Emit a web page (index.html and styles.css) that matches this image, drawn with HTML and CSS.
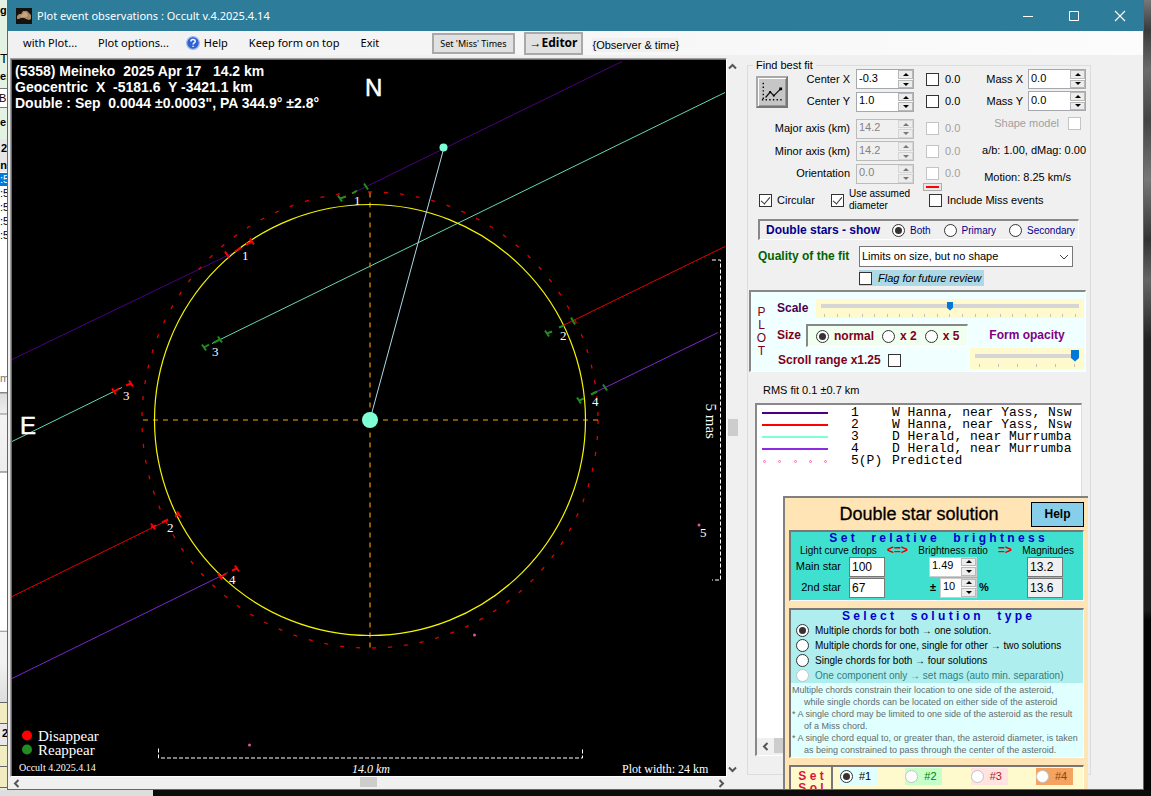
FILE: index.html
```html
<!DOCTYPE html>
<html lang="en">
<head>
<meta charset="utf-8">
<title>Plot event observations : Occult v.4.2025.4.14</title>
<link rel="stylesheet" href="styles.css">
</head>
<body>
<div class="desktop">
  <div class="behind-left">
    <div class="strip strip-green"><span>g</span><span class="tall">T</span><span>e:</span><span class="field">B</span><span class="last">e</span></div>
    <div class="strip strip-grey"><span>2</span><span>n</span></div>
    <div class="strip strip-list"><span class="selected">:5</span><span>:5</span><span>:5</span><span>:5</span><span>:5</span></div>
    <div class="strip strip-mid"><span>m</span></div>
    <div class="strip strip-low"></div>
    <div class="strip strip-boxes"><i></i><span>2</span><i></i><i></i></div>
  </div>

  <main class="window">
    <header class="titlebar">
      <svg class="app-icon" viewBox="0 0 16 16" width="16" height="16"><rect width="16" height="16" fill="#14110f"/><path d="M1 11 L1 8 L3 6 L5 6 L7 3 L11 3 L13 5 L15 7 L15 11 L13 12 L10 11 L8 10 L5 10 L3 11 Z" fill="#a98663"/><path d="M3 8 L6 7 L8 4 L11 5 L12 8 L10 9 L6 9 Z" fill="#c9a57c"/></svg>
      <h1>Plot event observations : Occult v.4.2025.4.14</h1>
      <div class="caption-buttons">
        <button type="button" aria-label="Minimize"><svg width="12" height="12" viewBox="0 0 12 12"><path d="M1 6.5h10" stroke="#fff"/></svg></button>
        <button type="button" aria-label="Maximize"><svg width="12" height="12" viewBox="0 0 12 12"><path d="M1.5 1.5h9v9h-9z" stroke="#fff" fill="none"/></svg></button>
        <button type="button" aria-label="Close"><svg width="12" height="12" viewBox="0 0 12 12"><path d="M1 1l10 10M11 1L1 11" stroke="#fff" stroke-width="1.2"/></svg></button>
      </div>
    </header>

    <nav class="menubar">
      <button type="button">with Plot...</button>
      <button type="button">Plot options...</button>
      <button type="button" class="with-icon"><svg width="14" height="14" viewBox="0 0 14 14"><circle cx="7" cy="7" r="6.3" fill="#2f62d0" stroke="#9db7e8" stroke-width="1.2"/><path d="M4.9 5.4c0-2.6 4.3-2.6 4.3 0 0 1.5-2.1 1.5-2.1 3.1M7.1 9.7v1.4" stroke="#fff" stroke-width="1.4" fill="none"/></svg>Help</button>
      <button type="button">Keep form on top</button>
      <button type="button">Exit</button>
      <button type="button" class="push push-miss">Set 'Miss' Times</button>
      <button type="button" class="push push-editor">→Editor</button>
      <span class="hint">{Observer &amp; time}</span>
    </nav>

    <div class="content">
      <section class="viewer">
        <div class="plot">
          <svg viewBox="12 61 713 713" role="img" aria-label="Occultation chord plot">
            <g fill="none">
              <path d="M12 359L240 249M352 193L622 61" stroke="#4b0082"/>
              <path d="M12 441L122 387M212 343L725 92" stroke="#66d8ae"/>
              <path d="M12 596L167 520M563 325L725 246" stroke="#e60000"/>
              <path d="M12 678L228 572M597 391L718 332" stroke="#7c26cc"/>
              <circle cx="370" cy="419.5" r="228" stroke="#e00000" stroke-width="1.3" stroke-dasharray="4 12"/>
              <path d="M143 419.5H598" stroke="#ffa500" stroke-dasharray="5 5"/>
              <path d="M370 192V647" stroke="#c88000" stroke-width="1.4" stroke-dasharray="5 5"/>
              <circle cx="370" cy="419.5" r="215.5" stroke="#f5f500" stroke-width="1.2"/>
              <path d="M444 147L370 419" stroke="#add8e6"/>
              <path d="M158.5 748V757.5H582.5V748M712 259.5H720.5V579.5H712" stroke="#fff" stroke-dasharray="4 2"/>
              <g stroke="#ff0000" stroke-width="2">
                <path d="M225 251l4 6M235 251l6-4M246 244l6-3M250 238l4 6"/>
                <path d="M112 388l4 6M114 391l5-3M126 385l5-2M129 380l4 6"/>
                <path d="M151 523l4 6M151 527l5-2M162 522l6-3M175 516l4-2M177 511l4 6"/>
                <path d="M218 573l4 6M220 577l6-4M232 570l5-2M235 565l4 6"/>
              </g>
              <g stroke="#228b22" stroke-width="2">
                <path d="M338 195l4 6M340 198l6-2M352 193l5-3M364 183l4 6"/>
                <path d="M202 344l4 6M204 347l5-3M214 342l6-3M218 336l4 6"/>
                <path d="M545 330l4 6M547 333l5-2M559 327l5-2M571 317l4 7"/>
                <path d="M577 397l4 6M579 400l5-2M591 394l6-3M603 384l4 6"/>
              </g>
            </g>
            <g fill="#7fffd4"><circle cx="443.5" cy="147" r="4"/><circle cx="370" cy="419.5" r="8"/></g>
            <g fill="#d8589c"><circle cx="699" cy="524.500" r="1.500"/><circle cx="474.500" cy="634.500" r="1.500"/><circle cx="249.500" cy="744.500" r="1.500"/></g>
            <circle cx="27" cy="735" r="5" fill="#ff0000"/><circle cx="27" cy="749" r="5" fill="#228b22"/>
            <g class="t-head">
              <text x="15" y="75">(5358) Meineko  2025 Apr 17   14.2 km</text>
              <text x="15" y="91">Geocentric  X  -5181.6  Y -3421.1 km</text>
              <text x="15" y="107">Double : Sep  0.0044 ±0.0003", PA 344.9° ±2.8°</text>
            </g>
            <g class="t-compass"><text x="365" y="95">N</text><text x="20" y="433">E</text></g>
            <g class="t-num">
              <text x="354" y="204">1</text><text x="242" y="259">1</text><text x="212" y="355">3</text><text x="123" y="399">3</text>
              <text x="560" y="339">2</text><text x="167" y="531">2</text><text x="592" y="405">4</text><text x="229" y="583">4</text><text x="700" y="536">5</text>
              <text x="622" y="772" class="t-width">Plot width: 24 km</text>
              <text x="352" y="772" class="t-italic">14.0 km</text>
            </g>
            <g class="t-legend"><text x="38" y="740">Disappear</text><text x="38" y="754">Reappear</text><text transform="translate(706 403) rotate(90)">5 mas</text></g>
            <text class="t-version" x="19" y="770">Occult 4.2025.4.14</text>
          </svg>
        </div>
        <div class="scroll scroll-v">
          <button type="button" aria-label="Scroll up"><svg width="9" height="9" viewBox="0 0 9 9"><path d="M1 6.500L4.500 3L8 6.500"/></svg></button>
          <i class="track-a"></i><i class="thumb"></i><i class="track-b"></i>
          <button type="button" aria-label="Scroll down"><svg width="9" height="9" viewBox="0 0 9 9"><path d="M1 2.500L4.500 6L8 2.500"/></svg></button>
        </div>
        <div class="scroll scroll-h">
          <button type="button" aria-label="Scroll left"><svg width="9" height="9" viewBox="0 0 9 9"><path d="M6.500 1L3 4.500L6.500 8"/></svg></button>
          <i class="track-b"></i><i class="thumb"></i><i class="track-b"></i>
          <button type="button" aria-label="Scroll right"><svg width="9" height="9" viewBox="0 0 9 9"><path d="M2.500 1L6 4.500L2.500 8"/></svg></button>
        </div>
      </section>

      <aside class="side">
        <fieldset class="best-fit">
          <legend>Find best fit</legend>

          <div class="fit-top">
            <button type="button" class="chart-button" aria-label="Plot light curve"><svg width="24" height="24" viewBox="0 0 24 24"><path d="M2.500 2V21M1 20.500H23" stroke="#000" stroke-width="1.500" stroke-dasharray="1.500 2.500" fill="none"/><path d="M5 18L10 12L14 16L22 8" stroke="#111" stroke-width="1.300" fill="none"/><path d="M20 7h3v3h-3zM9 11h2v2H9zM13 15h2v2h-2z"/></svg></button>
            <div class="fit-rows">
              <label for="cx">Center X</label>
              <span class="spin"><input id="cx" type="text" value="-0.3"><span class="ud"><button type="button" aria-label="Up"></button><button type="button" aria-label="Down"></button></span></span>
              <label class="tick"><input type="checkbox">0.0</label>
              <label for="cy">Center Y</label>
              <span class="spin"><input id="cy" type="text" value="1.0"><span class="ud"><button type="button" aria-label="Up"></button><button type="button" aria-label="Down"></button></span></span>
              <label class="tick"><input type="checkbox">0.0</label>
              <span class="fit-break"></span>
              <label for="maj">Major axis (km)</label>
              <span class="spin off"><input id="maj" type="text" value="14.2" disabled><span class="ud"><button type="button" disabled aria-label="Up"></button><button type="button" disabled aria-label="Down"></button></span></span>
              <label class="tick off"><input type="checkbox" disabled>0.0</label>
              <label for="min">Minor axis (km)</label>
              <span class="spin off"><input id="min" type="text" value="14.2" disabled><span class="ud"><button type="button" disabled aria-label="Up"></button><button type="button" disabled aria-label="Down"></button></span></span>
              <label class="tick off"><input type="checkbox" disabled>0.0</label>
              <label for="ori">Orientation</label>
              <span class="spin off"><input id="ori" type="text" value="0.0" disabled><span class="ud"><button type="button" disabled aria-label="Up"></button><button type="button" disabled aria-label="Down"></button></span></span>
              <label class="tick off"><input type="checkbox" disabled>0.0</label>
            </div>
            <div class="fit-mass">
              <div><label for="mx">Mass X</label><span class="spin"><input id="mx" type="text" value="0.0"><span class="ud"><button type="button" aria-label="Up"></button><button type="button" aria-label="Down"></button></span></span></div>
              <div><label for="my">Mass Y</label><span class="spin"><input id="my" type="text" value="0.0"><span class="ud"><button type="button" aria-label="Up"></button><button type="button" aria-label="Down"></button></span></span></div>
              <label class="shape off">Shape model<input type="checkbox" disabled></label>
              <p>a/b: 1.00, dMag: 0.00</p>
              <p class="motion">Motion: 8.25 km/s</p>
            </div>
          </div>

          <button type="button" class="red-key" aria-label="Clear"><i></i></button>

          <div class="fit-options">
            <label><input type="checkbox" checked>Circular</label>
            <label class="two-line"><input type="checkbox" checked><span>Use assumed diameter</span></label>
            <label><input type="checkbox">Include Miss events</label>
          </div>

          <div class="double-show">
            <b>Double stars - show</b>
            <label><input type="radio" name="show" checked>Both</label>
            <label><input type="radio" name="show">Primary</label>
            <label><input type="radio" name="show">Secondary</label>
          </div>

          <div class="quality">
            <label for="quality">Quality of the fit</label>
            <span class="select-wrap"><select id="quality"><option>Limits on size, but no shape</option></select><svg width="10" height="6" viewBox="0 0 10 6"><path d="M1 1l4 4l4-4" stroke="#444" fill="none"/></svg></span>
            <label class="flag"><input type="checkbox">Flag for future review</label>
          </div>

          <div class="plot-box">
            <div class="plot-word"><span>P</span><span>L</span><span>O</span><span>T</span></div>
            <div class="plot-controls">
              <div class="scale-row">
                <label for="scale">Scale</label>
                <div class="slider"><input id="scale" type="range" min="0" max="20" value="10"><div class="ticks"><i></i><i></i><i></i><i></i><i></i><i></i><i></i><i></i><i></i><i></i><i></i><i></i><i></i><i></i><i></i><i></i><i></i><i></i><i></i><i></i><i></i></div></div>
              </div>
              <div class="plot-lower">
                <div class="size-col">
                  <div class="size-row"><span>Size</span>
                    <div class="size-box">
                      <label><input type="radio" name="size" checked>normal</label>
                      <label><input type="radio" name="size">x 2</label>
                      <label><input type="radio" name="size">x 5</label>
                    </div>
                  </div>
                  <label class="range-row">Scroll range x1.25<input type="checkbox"></label>
                </div>
                <div class="opacity-col">
                  <label for="opacity">Form opacity</label>
                  <div class="slider slider-opacity"><input id="opacity" type="range" min="0" max="5" value="5"><div class="ticks"><i></i><i></i><i></i><i></i><i></i><i></i></div></div>
                </div>
              </div>
            </div>
          </div>

          <p class="rms">RMS fit 0.1 ±0.7 km</p>

          <div class="observers">
            <ul>
              <li><i class="key k1"></i><span>1</span><span>W Hanna, near Yass, Nsw</span></li>
              <li><i class="key k2"></i><span>2</span><span>W Hanna, near Yass, Nsw</span></li>
              <li><i class="key k3"></i><span>3</span><span>D Herald, near Murrumba</span></li>
              <li><i class="key k4"></i><span>4</span><span>D Herald, near Murrumba</span></li>
              <li><span class="dots"><i></i><i></i><i></i><i></i><i></i></span><span>5(P)</span><span>Predicted</span></li>
            </ul>
            <div class="list-scroll"><button type="button" aria-label="Scroll list left"><svg width="9" height="9" viewBox="0 0 9 9"><path d="M6.500 1L3 4.500L6.500 8"/></svg></button><i></i></div>
          </div>
        </fieldset>

        <section class="solution">
          <div class="solution-head"><h2>Double star solution</h2><button type="button">Help</button></div>

          <div class="brightness">
            <h3>S e t     r e l a t i v e     b r i g h t n e s s</h3>
            <div class="bright-heads"><span>Light curve drops</span><b>&lt;=&gt;</b><span>Brightness ratio</span><b>=&gt;</b><span>Magnitudes</span></div>
            <div class="bright-row">
              <label for="main">Main star</label><input id="main" type="text" value="100">
              <span class="ratio"><span class="spin"><input type="text" value="1.49" aria-label="Brightness ratio"><span class="ud"><button type="button" aria-label="Up"></button><button type="button" aria-label="Down"></button></span></span></span>
              <b></b><input class="out" type="text" value="13.2" readonly aria-label="Main magnitude">
            </div>
            <div class="bright-row">
              <label for="second">2nd star</label><input id="second" type="text" value="67">
              <span class="ratio"><b>±</b><span class="spin narrow"><input type="text" value="10" aria-label="Tolerance"><span class="ud"><button type="button" aria-label="Up"></button><button type="button" aria-label="Down"></button></span></span></span>
              <b class="percent">%</b><input class="out" type="text" value="13.6" readonly aria-label="Second magnitude">
            </div>
          </div>

          <div class="types">
            <h3>S e l e c t     s o l u t i o n     t y p e</h3>
            <label><input type="radio" name="type" checked>Multiple chords for both → one solution.</label>
            <label><input type="radio" name="type">Multiple chords for one, single for other → two solutions</label>
            <label><input type="radio" name="type">Single chords for both → four solutions</label>
            <label class="off"><input type="radio" name="type" disabled>One component only → set mags (auto min. separation)</label>
            <div class="notes">
              <p>Multiple chords constrain their location to one side of the asteroid,</p>
              <p class="in">while single chords can be located on either side of the asteroid</p>
              <p>* A single chord may be limited to one side of the asteroid as the result</p>
              <p class="in">of a Miss chord.</p>
              <p>* A single chord equal to, or greater than, the asteroid diameter, is taken</p>
              <p class="in">as being constrained to pass through the center of the asteroid.</p>
            </div>
          </div>

          <div class="sets">
            <div class="set-word"><span>S e t</span><span>S o l</span></div>
            <div class="set-options">
              <label class="s1"><input type="radio" name="set" checked>#1</label>
              <label class="s2"><input type="radio" name="set" disabled>#2</label>
              <label class="s3"><input type="radio" name="set" disabled>#3</label>
              <label class="s4"><input type="radio" name="set" disabled>#4</label>
            </div>
          </div>
        </section>
      </aside>
    </div>
  </main>

  <div class="behind-right"></div>
  <div class="behind-bottom"><i></i></div>
</div>
</body>
</html>
```
FILE: styles.css
```css
* { box-sizing: border-box; margin: 0; padding: 0; }
body { font: 11px/13px "Liberation Sans", Arial, sans-serif; color: #000; background: #0c0c0c; }
button, input, select { font: inherit; color: inherit; }
button { border: 0; background: none; }
i { display: block; font-style: normal; }

.desktop { display: grid; grid-template-columns: 7px minmax(0, 1fr) 7px; grid-template-rows: minmax(0, 1fr) 6px; height: 100vh; }

/* windows behind the form */
.behind-left { display: flex; flex-direction: column; overflow: hidden; font-weight: bold; }
.strip { display: flex; flex-direction: column; }
.strip-green { height: 139px; padding-top: 4px; background: #e3f2e3; gap: 5px; }
.strip-green .tall { margin-top: 30px; font-weight: normal; font-size: 13px; }
.strip-green .field { background: #fff; border: solid #777; border-width: 1px 0; height: 20px; line-height: 18px; font-weight: normal; margin-left: -1px; }
.strip-green .last { margin-top: 3px; }
.strip-grey { height: 33px; background: #e6e6e6; align-items: flex-end; justify-content: space-between; padding-top: 3px; }
.strip-list { height: 200px; background: #fff; gap: 1px; padding-top: 1px; font-weight: normal; }
.strip-list .selected { background: #0078d7; color: #fff; }
.strip-mid { height: 260px; color: #777; font-weight: normal; background: linear-gradient(#fff 20px, #888 20px, #888 21px, #ddd 22px, #eee 41px, #888 42px, #f4f4f4 43px, #eee 99px, #666 100px, #fff 101px, #fff 258px, #888); }
.strip-low { height: 71px; background: linear-gradient(#f2f2f2 30px, #ddd); border-bottom: 1px solid #666; }
.strip-boxes { flex: 1; background: #e8e8e8; }
.strip-boxes i { height: 21px; background: #f2edc0; border-bottom: 1px solid #666; }
.strip-boxes span { height: 22px; border-bottom: 1px solid #666; padding: 3px 0 0 2px; }
.behind-right { background: linear-gradient(#777, #3a3a3a 30px, #6b6b6b 70px, #444 120px, #777 180px, #333 240px, #666 280px, #222 340px, #1b1b1b 610px, #050505 620px); }
.behind-bottom { grid-column: 1 / -1; background: #0c0c0c; }
.behind-bottom i { width: 153px; height: 6px; background: #dedede; }

/* window frame */
.window { display: flex; flex-direction: column; border: solid #2d7a96; border-width: 0 1px 1px; background: #f0f0f0; min-width: 0; overflow: hidden; }
.titlebar { display: flex; align-items: center; height: 31px; padding-left: 8px; gap: 5px; background: #2d7c99; color: #fff; flex: none; }
.titlebar h1 { flex: 1; font: 11px/16px "Noto Sans", sans-serif; }
.caption-buttons { display: flex; }
.caption-buttons button { width: 46px; height: 30px; display: grid; place-items: center; }
.menubar { display: flex; align-items: center; height: 24px; padding-left: 15px; flex: none; background: linear-gradient(90deg, #f1f1f1, #fcfcfc); font: 11px/16px "Noto Sans", sans-serif; }
.menubar button { margin-right: 21px; white-space: nowrap; }
.menubar .with-icon { display: flex; align-items: center; gap: 4px; margin: 0 21px 0 -4px; }
.menubar .push { border: 2px solid #a9a9a9; background: #e1e1e1; }
.menubar .push-miss { height: 21px; padding: 0 6px; margin: 0 9px 0 32px; font: 9px/15px "Noto Sans", sans-serif; }
.menubar .push-editor { height: 23px; padding: 0 4px; margin-right: 9px; font-weight: bold; font-size: 12px; }
.hint { background: #f0f0f0; font: 11px/14px "Liberation Sans", sans-serif; margin-top: 3px; }
.content { display: flex; flex: 1; min-height: 0; gap: 9px; padding-right: 52px; }

/* plot viewer */
.viewer { flex: 1; min-width: 0; display: grid; grid-template-columns: minmax(0, 1fr) 11px; grid-template-rows: minmax(0, 1fr) 12px; padding: 3px 0 0 2px; }
.plot { background: #000; border: 1px solid; border-color: #a0a0a0 #fff #fff #a0a0a0; box-shadow: inset 1px 1px #696969; padding: 2px 1px 1px 1px; overflow: hidden; }
.plot svg { display: block; width: 100%; height: 100%; }
.plot text { fill: #fff; white-space: pre; }
.t-head { font: bold 14px "Liberation Sans", sans-serif; }
.t-compass { font: 24px "Liberation Sans", sans-serif; stroke: #fff; stroke-width: 0.5; }
.t-num { font: 13px "Liberation Serif", serif; }
.t-width { font-size: 12px; }
.t-italic { font-style: italic; font-size: 12px; }
.t-legend { font: 15px "Liberation Serif", serif; }
.t-version { font: 10px "Liberation Serif", serif; }
.scroll { display: flex; }
.scroll path, .list-scroll path { fill: none; stroke: #555; stroke-width: 2; }
.scroll button { display: grid; place-items: center; width: 12px; height: 12px; }
.scroll-v { flex-direction: column; align-items: center; padding: 2px 0; }
.scroll-v .thumb { width: 10px; height: 17px; }
.scroll .thumb { background: #cdcdcd; }
.track-a { flex: 52; }
.track-b { flex: 49; }
.scroll-h .thumb { width: 17px; height: 10px; }

/* side panel */
.side { position: relative; flex: none; width: 344px; padding-top: 4px; overflow: hidden; }
.best-fit { border: 1px solid #dcdcdc; min-width: 0; height: 716px; padding: 0 4px 0 0; }
.best-fit legend { margin-left: 5px; padding: 0 3px; }
label { white-space: nowrap; }
.off { color: #a0a0a0; }
input[type=checkbox], input[type=radio] { appearance: none; flex: none; width: 13px; height: 13px; border: 1px solid #333; background: #fff; display: grid; place-items: center; }
input[type=radio] { border-radius: 50%; }
input[type=checkbox]:disabled, input[type=radio]:disabled { border-color: #c4c4c4; }
input[type=checkbox]:checked::before { content: ""; width: 4px; height: 8px; border: solid #333; border-width: 0 1px 1px 0; rotate: 40deg; translate: 0 -1px; }
input[type=radio]:checked::before { content: ""; width: 7px; height: 7px; border-radius: 50%; background: #333; }

.spin { display: flex; width: 58px; height: 20px; border: 1px solid #a5a8ad; background: #fff; }
.spin input { flex: 1; min-width: 0; border: 0; background: none; padding: 0 2px 2px; outline: 0; }
.spin .ud { display: grid; width: 15px; gap: 1px; }
.ud button { background: #ececec; border: 1px solid #b8b8b8; display: grid; place-items: center; }
.ud button::before { content: ""; border: 3px solid transparent; border-top-width: 0; border-bottom-color: #000; }
.ud button + button::before { border-top: 3px solid #000; border-bottom: 0; }
.spin.off { background: #f0f0f0; border-color: #bbb; color: #838383; }
.off .ud button::before { border-bottom-color: #777; }
.off .ud button + button::before { border-top-color: #777; }
.spin.off .ud button { border-color: #d5d5d5; }

.fit-top { display: flex; padding-left: 8px; margin-top: -3px; }
.chart-button { flex: none; width: 32px; height: 32px; margin-top: 7px; background: #c6c6c6; border: 2px solid; border-color: #a8a8a8 #777 #777 #a8a8a8; box-shadow: inset 1px 1px #fff, inset -1px -1px #999; display: grid; place-items: center; }
.chart-button svg { width: 22px; height: 24px; }
.fit-rows { flex: none; display: grid; grid-template-columns: 62px 58px auto; column-gap: 6px; row-gap: 2px; align-items: center; }
.fit-rows > label:not(.tick) { justify-self: end; }
.fit-rows > * { min-height: 20px; display: flex; align-items: center; }
.fit-rows > .spin { align-items: stretch; }
.fit-rows > .fit-break { grid-column: 1 / -1; min-height: 2px; height: 2px; }
.tick { gap: 6px; padding-left: 6px; }
.fit-mass { flex: 1; display: flex; flex-direction: column; align-items: flex-end; gap: 2px; }
.fit-mass div { display: flex; align-items: center; gap: 5px; }
.shape { display: flex; align-items: center; gap: 9px; margin: 4px 5px 0 0; }
.fit-mass p { margin-top: 12px; }
.fit-mass p.motion { margin-right: 15px; }
.red-key { display: grid; place-items: center; width: 19px; height: 8px; margin: -1px 0 0 175px; border: 1px solid #adadad; background: #e8e8e8; }
.red-key i { width: 13px; height: 2px; background: #f00; }
.fit-options { display: flex; height: 18px; align-items: center; padding-left: 11px; }
.fit-options label { display: flex; align-items: center; gap: 5px; }
.fit-options .two-line { margin: 0 14px 0 16px; }
.two-line span { width: 66px; line-height: 12px; font-size: 10px; white-space: normal; }

.double-show { display: flex; align-items: center; height: 21px; margin: 10px 7px 0 10px; padding-left: 6px; border: solid; border-width: 2px 1px 1px 2px; border-color: #888 #fff #fff #888; color: #00008b; }
.double-show b { font-size: 12px; margin-right: 12px; }
.double-show label { display: flex; align-items: center; gap: 5px; font-size: 10px; margin-right: 13px; }
.double-show label:last-child { margin-right: 0; }
.quality { display: grid; grid-template-columns: 101px minmax(0, 1fr); margin: 6px 13px 0 10px; align-items: center; row-gap: 3px; }
.quality > label:first-child { font-weight: bold; font-size: 12px; color: #006400; }
.select-wrap { position: relative; display: block; }
.select-wrap select { appearance: none; display: block; width: 100%; height: 21px; border: 1px solid #777; background: #fff; padding: 0 2px; border-radius: 0; }
.select-wrap svg { position: absolute; right: 4px; top: 8px; }
.quality .flag { grid-column: 2; justify-self: start; display: flex; align-items: center; gap: 6px; height: 16px; padding-right: 3px; background: #add8e6; font-style: italic; }

.plot-box { display: flex; margin: 4px 0 0 1px; height: 82px; padding: 7px 1px 0 5px; border: solid; border-width: 2px 1px 1px 2px; border-color: #888 #fff #fff #888; background: #f0ffff; color: #800020; font-weight: bold; font-size: 12px; }
.plot-word { display: flex; flex-direction: column; align-items: center; width: 11px; padding-top: 7px; font-weight: normal; }
.plot-controls { flex: 1; min-width: 0; padding-left: 10px; }
.scale-row { display: flex; align-items: center; }
.scale-row label { width: 39px; color: #4b0050; }
.slider { flex: 1; height: 19px; padding: 3px 5px 0; background: #fffacd; }
.slider input { appearance: none; display: block; width: 100%; height: 8px; background: linear-gradient(#d6d6d6, #d6d6d6) 0 2px / 100% 4px no-repeat; }
.slider input::-webkit-slider-thumb { appearance: none; width: 6px; height: 9px; background: #0078d7; clip-path: polygon(0 0, 100% 0, 100% 70%, 50% 100%, 0 70%); }
.ticks { display: flex; justify-content: space-between; padding: 0 3px; margin-top: 4px; }
.ticks i { width: 1px; height: 3px; background: #c4c4b0; }
.plot-lower { display: flex; justify-content: space-between; }
.size-row { display: flex; align-items: center; margin-top: 6px; height: 23px; }
.size-row > span { width: 29px; }
.size-box { display: flex; align-items: center; height: 23px; padding: 0 8px 0 8px; gap: 8px; border: solid; border-width: 2px 1px 1px 2px; border-color: #888 #fff #fff #888; background: #f0fff0; }
.size-box label { display: flex; align-items: center; gap: 5px; }
.range-row { display: flex; align-items: center; gap: 7px; margin-top: 7px; padding-left: 1px; }
.opacity-col { width: 114px; padding-top: 11px; color: #800080; }
.opacity-col label { display: block; text-align: center; }
.slider-opacity { height: 21px; margin-top: 6px; padding: 1px 5px 0; }
.slider-opacity input { height: 13px; background-position: 0 5px; }
.slider-opacity input::-webkit-slider-thumb { width: 8px; height: 12px; }
.slider-opacity .ticks { margin-top: 2px; padding: 0 4px; }
.rms { margin: 12px 0 6px 15px; }

.observers { display: flex; flex-direction: column; justify-content: space-between; margin: 0 4px 0 7px; height: 353px; border: solid; border-width: 2px 1px 1px 2px; border-color: #888 #ddd #fff #888; background: #fff; }
.observers ul { list-style: none; padding-top: 2px; overflow: hidden; font: 13px/12px "Liberation Mono", monospace; }
.observers li { display: grid; grid-template-columns: 66px 32px auto; column-gap: 8px; padding-left: 5px; align-items: center; white-space: pre; height: 12px; }
.observers li > span:nth-child(2) { padding-left: 15px; width: 47px; }
.observers li { grid-template-columns: 66px 48px auto; }
.key { height: 2px; }
.k1 { background: #4b0082; }
.k2 { background: #f00; }
.k3 { background: #7fffd4; }
.k4 { background: #8a2be2; }
.dots { display: flex; justify-content: space-between; padding: 0 1px; }
.dots i { width: 3px; height: 3px; border: 1px solid #ff69b4; border-radius: 50%; }
.list-scroll { display: flex; background: #f0f0f0; height: 17px; }
.list-scroll button { width: 17px; display: grid; place-items: center; }
.list-scroll i { width: 180px; height: 15px; background: #cdcdcd; }

/* solution form, floating over the observer list */
.solution { position: absolute; left: 36px; right: 3px; top: 441px; bottom: 0; overflow: hidden; padding: 0 4px 0 4px; border: solid #808080; border-width: 2px 0 0 2px; background: #ffe4b5; }
.solution-head { display: flex; height: 32px; align-items: center; }
.solution-head h2 { flex: 1; text-align: center; font-size: 18px; font-weight: normal; -webkit-text-stroke: 0.3px #000; padding-left: 18px; }
.solution-head button { width: 53px; height: 25px; border: 1px solid #000; background: #87ceeb; font-weight: bold; font-size: 12px; }
.solution h3 { font-size: 12px; line-height: 13px; color: #0000cd; text-align: center; white-space: pre; }
.brightness, .types, .sets { border: solid; border-width: 2px 1px 1px 2px; border-color: #777 #fff #fff #777; }
.brightness { height: 71px; background: #40e0d0; }
.bright-heads { display: flex; justify-content: space-between; padding: 0 9px; font-size: 10px; line-height: 11px; }
.bright-heads b { color: #e00000; font-size: 12px; }
.bright-row { display: grid; grid-template-columns: 50px 36px 84px 34px 36px; column-gap: 8px; align-items: center; height: 21px; }
.bright-row label { text-align: right; }
.bright-row > input { width: 36px; height: 20px; border: 1px solid #777; background: #fff; padding: 0 2px; font-size: 12px; }
.bright-row .spin { width: 48px; border-color: #ccc; }
.bright-row .spin.narrow { width: 37px; }
.bright-row .out { background: #f0f0f0; }
.bright-row .percent { margin-left: -6px; }
.ratio { display: flex; justify-content: flex-end; gap: 4px; align-items: center; }
.types { margin-top: 7px; background: #afeeee; }
.types h3 { padding-bottom: 1px; line-height: 12px; }
.types label { display: flex; align-items: center; gap: 6px; height: 15px; padding-left: 5px; font-size: 10px; }
.types label.off { color: #2f8080; }
.notes { padding: 1px 0 1px 1px; background: #e0ffff; color: #606c6c; font-size: 9px; line-height: 12px; white-space: nowrap; overflow: hidden; }
.notes .in { padding-left: 12px; }
.sets { display: flex; margin-top: 7px; height: 60px; background: #fffacd; }
.set-word { width: 42px; padding-top: 3px; border-right: 2px solid #777; text-align: center; font-weight: bold; color: #dc143c; font-size: 12px; white-space: pre; }
.set-word span { display: block; line-height: 12px; }
.set-options { flex: 1; display: flex; justify-content: space-between; padding: 1px 10px 0 7px; }
.set-options label { display: flex; align-items: center; gap: 6px; width: 37px; height: 17px; }
.s1 { background: #e0ffff; }
.s2 { background: #c8ffc8; color: #008000; }
.s3 { background: #ffe4e1; color: #b22222; }
.s4 { background: #f4a460; color: #8b4513; }
```
